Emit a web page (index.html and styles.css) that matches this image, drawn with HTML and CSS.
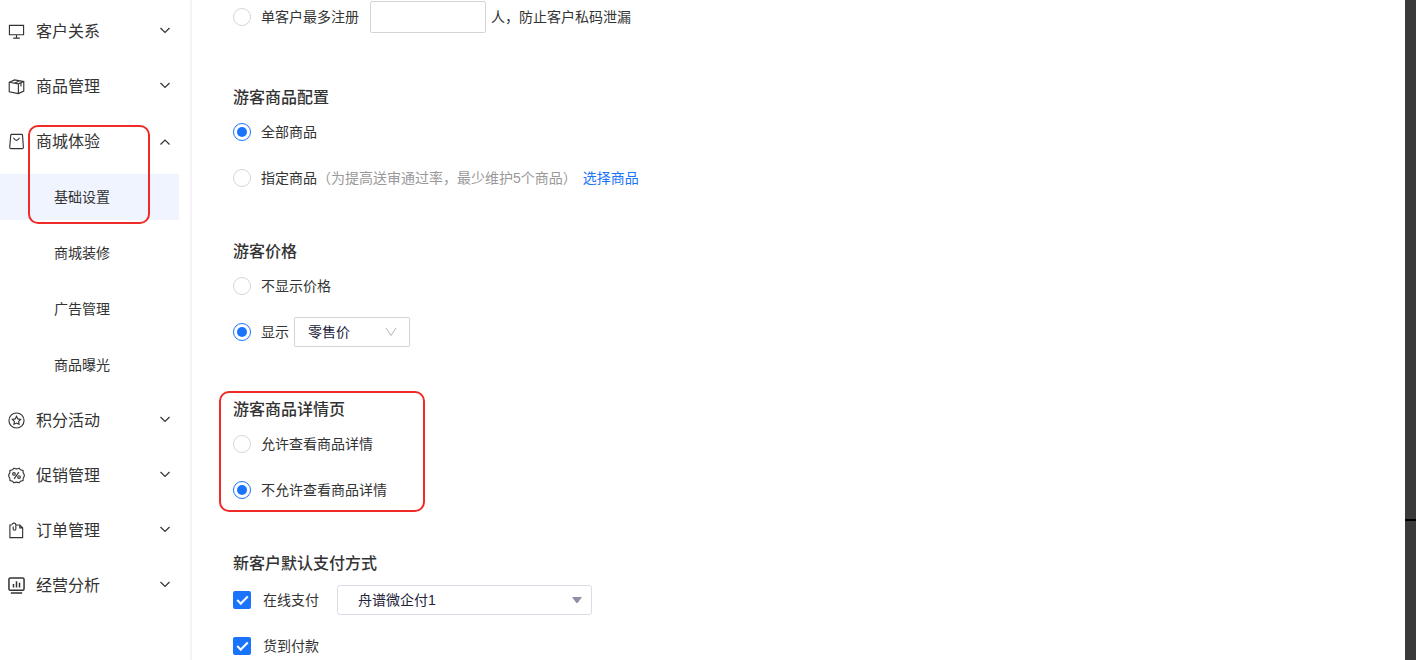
FILE: index.html
```html
<!DOCTYPE html>
<html lang="zh-CN">
<head>
<meta charset="utf-8">
<title>基础设置</title>
<link rel="stylesheet" href="styles.css">
</head>
<body>
<div class="app">
  <nav class="sidebar">
    <button class="menu-item" type="button">
      <svg class="menu-icon" viewBox="0 0 18 18"><path d="M1.500 2.500h15v10h-15zM9 12.500v3.500M5.500 16h7"/></svg>
      <span class="menu-text">客户关系</span>
      <svg class="arrow" viewBox="0 0 12 12"><path d="M1.500 3l4.500 4.500L10.500 3"/></svg>
    </button>
    <button class="menu-item" type="button">
      <svg class="menu-icon" viewBox="0 0 18 18"><path d="M1.300 4.500L7 2l9.700 1.800v10L11 16.500l-9.700-2zM1.300 4.500L11 6.200l5.700-2.400M11 6.200v10.300M7 5.500l5-2.500M13.700 5v4"/></svg>
      <span class="menu-text">商品管理</span>
      <svg class="arrow" viewBox="0 0 12 12"><path d="M1.500 3l4.500 4.500L10.500 3"/></svg>
    </button>
    <div class="menu-group">
      <button class="menu-item" type="button" aria-expanded="true">
        <svg class="menu-icon" viewBox="0 0 18 18"><path d="M4 1.500h10.300q1 0 1.100 1l.9 12.500q0 1.500-1.500 1.500H3.300q-1.500 0-1.500-1.500L2.900 2.500q.1-1 1.100-1zM5.800 5Q9 10.500 12.200 5"/></svg>
        <span class="menu-text">商城体验</span>
        <svg class="arrow arrow-up" viewBox="0 0 12 12"><path d="M1.500 8.500L6 4l4.500 4.500"/></svg>
      </button>
      <a class="submenu-item" href="#basic" aria-current="page"><span class="submenu-label">基础设置</span></a>
      <a class="submenu-item" href="#decor"><span class="submenu-label">商城装修</span></a>
      <a class="submenu-item" href="#ads"><span class="submenu-label">广告管理</span></a>
      <a class="submenu-item" href="#exposure"><span class="submenu-label">商品曝光</span></a>
      <div class="marker marker-menu"></div>
    </div>
    <button class="menu-item" type="button">
      <svg class="menu-icon" viewBox="0 0 18 18"><circle cx="9" cy="9" r="8"/><path d="M9 4.600l1.400 2.700 3 .5-2.100 2.200.4 3L9 11.700 6.300 13l.4-3-2.100-2.200 3-.5z"/></svg>
      <span class="menu-text">积分活动</span>
      <svg class="arrow" viewBox="0 0 12 12"><path d="M1.500 3l4.500 4.500L10.500 3"/></svg>
    </button>
    <button class="menu-item" type="button">
      <svg class="menu-icon" viewBox="0 0 18 18"><path d="M6.300 1.200Q9 2.800 11.700 1.200L13.200 3l2.700.7q-.4 2.400 1.300 4.300v2q-1.700 1.900-1.300 4.300l-2.700.7-1.500 1.800Q9 15.200 6.300 16.800L4.800 15l-2.700-.7Q2.500 11.900.8 10V8Q2.500 6.100 2.100 3.700L4.800 3z"/><path d="M11.500 5.500l-5 7"/><circle cx="6.300" cy="7.300" r="1.400"/><circle cx="11.700" cy="10.700" r="1.400"/></svg>
      <span class="menu-text">促销管理</span>
      <svg class="arrow" viewBox="0 0 12 12"><path d="M1.500 3l4.500 4.500L10.500 3"/></svg>
    </button>
    <button class="menu-item" type="button">
      <svg class="menu-icon" viewBox="0 0 18 18"><path d="M4 3.200H2v13.300h13.500V6.200l-3-3H8.500M12.500 3.200v3h3M4.300 3q0-1.800 2-1.800t2 1.800v4.500q0 1.200-1.400 1.200T5.500 7.500V4.800"/></svg>
      <span class="menu-text">订单管理</span>
      <svg class="arrow" viewBox="0 0 12 12"><path d="M1.500 3l4.500 4.500L10.500 3"/></svg>
    </button>
    <button class="menu-item" type="button">
      <svg class="menu-icon menu-icon-bold" viewBox="0 0 18 18"><rect x="1" y="1" width="16" height="13" rx="1.500"/><path d="M5.800 7.500V11M9 4.500V11M12.200 6v5M3 17h12"/></svg>
      <span class="menu-text">经营分析</span>
      <svg class="arrow" viewBox="0 0 12 12"><path d="M1.500 3l4.500 4.500L10.500 3"/></svg>
    </button>
  </nav>

  <main class="content">
    <section class="section section-register">
      <div class="row">
        <input class="radio" type="radio" name="register" id="limit">
        <label for="limit">单客户最多注册</label>
        <input class="number-box" type="text" aria-label="最多注册人数">
        <span class="suffix">人，防止客户私码泄漏</span>
      </div>
    </section>

    <section class="section">
      <h2 class="title">游客商品配置</h2>
      <div class="row">
        <input class="radio" type="radio" name="goods" id="goods-all" checked>
        <label for="goods-all">全部商品</label>
      </div>
      <div class="row">
        <input class="radio" type="radio" name="goods" id="goods-some">
        <label for="goods-some">指定商品<span class="hint">（为提高送审通过率，最少维护5个商品）</span></label>
        <a class="link" href="#choose">选择商品</a>
      </div>
    </section>

    <section class="section section-price">
      <h2 class="title">游客价格</h2>
      <div class="row">
        <input class="radio" type="radio" name="price" id="price-hide">
        <label for="price-hide">不显示价格</label>
      </div>
      <div class="row">
        <input class="radio" type="radio" name="price" id="price-show" checked>
        <label for="price-show">显示</label>
        <div class="select-wrap price-select">
          <select class="select" aria-label="显示价格"><option>零售价</option></select>
          <svg class="select-chevron" viewBox="0 0 12 12"><path d="M1 2l5 7.500L11 2"/></svg>
        </div>
      </div>
    </section>

    <section class="section">
      <h2 class="title">游客商品详情页</h2>
      <div class="row">
        <input class="radio" type="radio" name="detail" id="detail-yes">
        <label for="detail-yes">允许查看商品详情</label>
      </div>
      <div class="row">
        <input class="radio" type="radio" name="detail" id="detail-no" checked>
        <label for="detail-no">不允许查看商品详情</label>
      </div>
      <div class="marker marker-detail"></div>
    </section>

    <section class="section section-pay">
      <h2 class="title">新客户默认支付方式</h2>
      <div class="row">
        <input class="checkbox" type="checkbox" id="pay-online" checked>
        <label for="pay-online">在线支付</label>
        <div class="select-wrap pay-select">
          <select class="select" aria-label="在线支付方式"><option>舟谱微企付1</option></select>
          <svg class="select-caret" viewBox="0 0 10 6"><path d="M0 0h10L6 5.500q-1 1-2 0z"/></svg>
        </div>
      </div>
      <div class="row">
        <input class="checkbox" type="checkbox" id="pay-cod" checked>
        <label for="pay-cod">货到付款</label>
      </div>
    </section>
  </main>
  <div class="edge"><div class="edge-top"></div><div class="edge-bottom"></div></div>
</div>
</body>
</html>
```

FILE: styles.css
```css
* {
  box-sizing: border-box;
}

body {
  margin: 0;
  background: #fff;
  color: #333;
  font: 14px/24px "Liberation Sans", "Noto Sans CJK SC", sans-serif;
}

.app {
  display: flex;
  height: 100vh;
  overflow: hidden;
}

/* Sidebar */
.sidebar {
  flex: none;
  width: 192px;
  padding: 4px 11px 0 0;
  border-right: 2px solid #f3f3f4;
}

.menu-item {
  display: flex;
  align-items: center;
  width: 100%;
  height: 55px;
  padding: 0 8px;
  border: 0;
  background: none;
  color: inherit;
  font: inherit;
  font-size: 16px;
  text-align: left;
}

.menu-icon {
  width: 17px;
  height: 17px;
  margin-right: 11px;
  fill: none;
  stroke: #333;
  stroke-width: 1.2;
}

.menu-icon-bold {
  stroke-width: 1.6;
}

.menu-text {
  flex: 1;
}

.arrow {
  width: 12px;
  height: 12px;
  margin-bottom: 2px;
  fill: none;
  stroke: #333;
  stroke-width: 1.2;
}

.arrow-up {
  margin-bottom: 0;
}

.menu-group {
  position: relative;
}

.submenu-item {
  display: flex;
  padding: 5px 0;
  color: inherit;
  text-decoration: none;
}

.submenu-label {
  flex: 1;
  padding-left: 54px;
  line-height: 46px;
}

.submenu-item[aria-current] .submenu-label {
  background: #f0f4ff;
}

/* Red highlight frames */
.marker {
  position: absolute;
  border: 2px solid #ee2b27;
  border-radius: 10px;
  pointer-events: none;
}

.marker-menu {
  top: 11px;
  left: 28px;
  width: 122px;
  height: 99px;
}

.marker-detail {
  top: -6px;
  left: -14px;
  width: 206px;
  height: 121px;
}

/* Settings form */
.content {
  flex: 1;
  min-width: 0;
  padding: 1px 0 0 41px;
}

.section {
  position: relative;
  display: flex;
  flex-direction: column;
  align-items: flex-start;
  gap: 14px;
  margin-bottom: 45px;
}

.section-register {
  margin-bottom: 52px;
}

.section-price {
  margin-bottom: 49px;
}

.title {
  margin: 0 0 -9px;
  font-size: 16px;
  font-weight: 500;
  line-height: 26px;
}

.section-pay .title {
  margin-bottom: -7px;
}

.row {
  display: flex;
  align-items: center;
  height: 32px;
}

.radio,
.checkbox {
  display: grid;
  place-items: center;
  flex: none;
  width: 18px;
  height: 18px;
  margin: 0 10px 0 0;
  appearance: none;
}

.radio {
  border: 1px solid #d6d6d6;
  border-radius: 50%;
}

.radio:checked {
  border-color: #1a73fb;
}

.radio:checked::before {
  content: "";
  width: 10px;
  height: 10px;
  border-radius: 50%;
  background: #1a73fb;
}

.checkbox {
  margin-right: 12px;
  border-radius: 2px;
  background: #1a73fb;
}

.checkbox::before {
  content: "";
  box-sizing: border-box;
  width: 11px;
  height: 6px;
  margin-bottom: 3px;
  border: solid #fff;
  border-width: 0 0 2px 2px;
  transform: rotate(-45deg);
}

.number-box {
  width: 116px;
  height: 32px;
  margin: 0 5px 0 11px;
  padding: 0 8px;
  border: 1px solid #d4d4d4;
  border-radius: 2px;
  font: inherit;
}

.hint {
  color: #999;
}

.link {
  margin-left: 6px;
  color: #1a73fb;
  text-decoration: none;
}

.select-wrap {
  position: relative;
  height: 30px;
}

.select {
  width: 100%;
  height: 100%;
  margin: 0;
  border: 1px solid #d2d3d8;
  border-radius: 2px;
  background: #fff;
  color: #23233c;
  font: inherit;
  appearance: none;
}

.price-select {
  width: 116px;
  margin-left: 5px;
}

.price-select .select {
  padding: 0 30px 0 13px;
}

.pay-select {
  width: 255px;
  margin-left: 18px;
}

.pay-select .select {
  padding: 0 30px 0 20px;
  border-color: #d9dbe5;
  border-radius: 3px;
}

.select-chevron {
  position: absolute;
  top: 9px;
  right: 13px;
  width: 12px;
  height: 12px;
  fill: none;
  stroke: #b4b4b4;
}

.select-caret {
  position: absolute;
  top: 12px;
  right: 10px;
  width: 10px;
  height: 6px;
  fill: #8f90a6;
}

/* Dark strip along the right side */
.edge {
  display: flex;
  flex-direction: column;
  gap: 2px;
  flex: none;
  width: 11px;
  background: #000;
}

.edge-top {
  flex: 519;
  background: #3a3a3a;
}

.edge-bottom {
  flex: 139;
  background: #3a3a3a;
}
```
